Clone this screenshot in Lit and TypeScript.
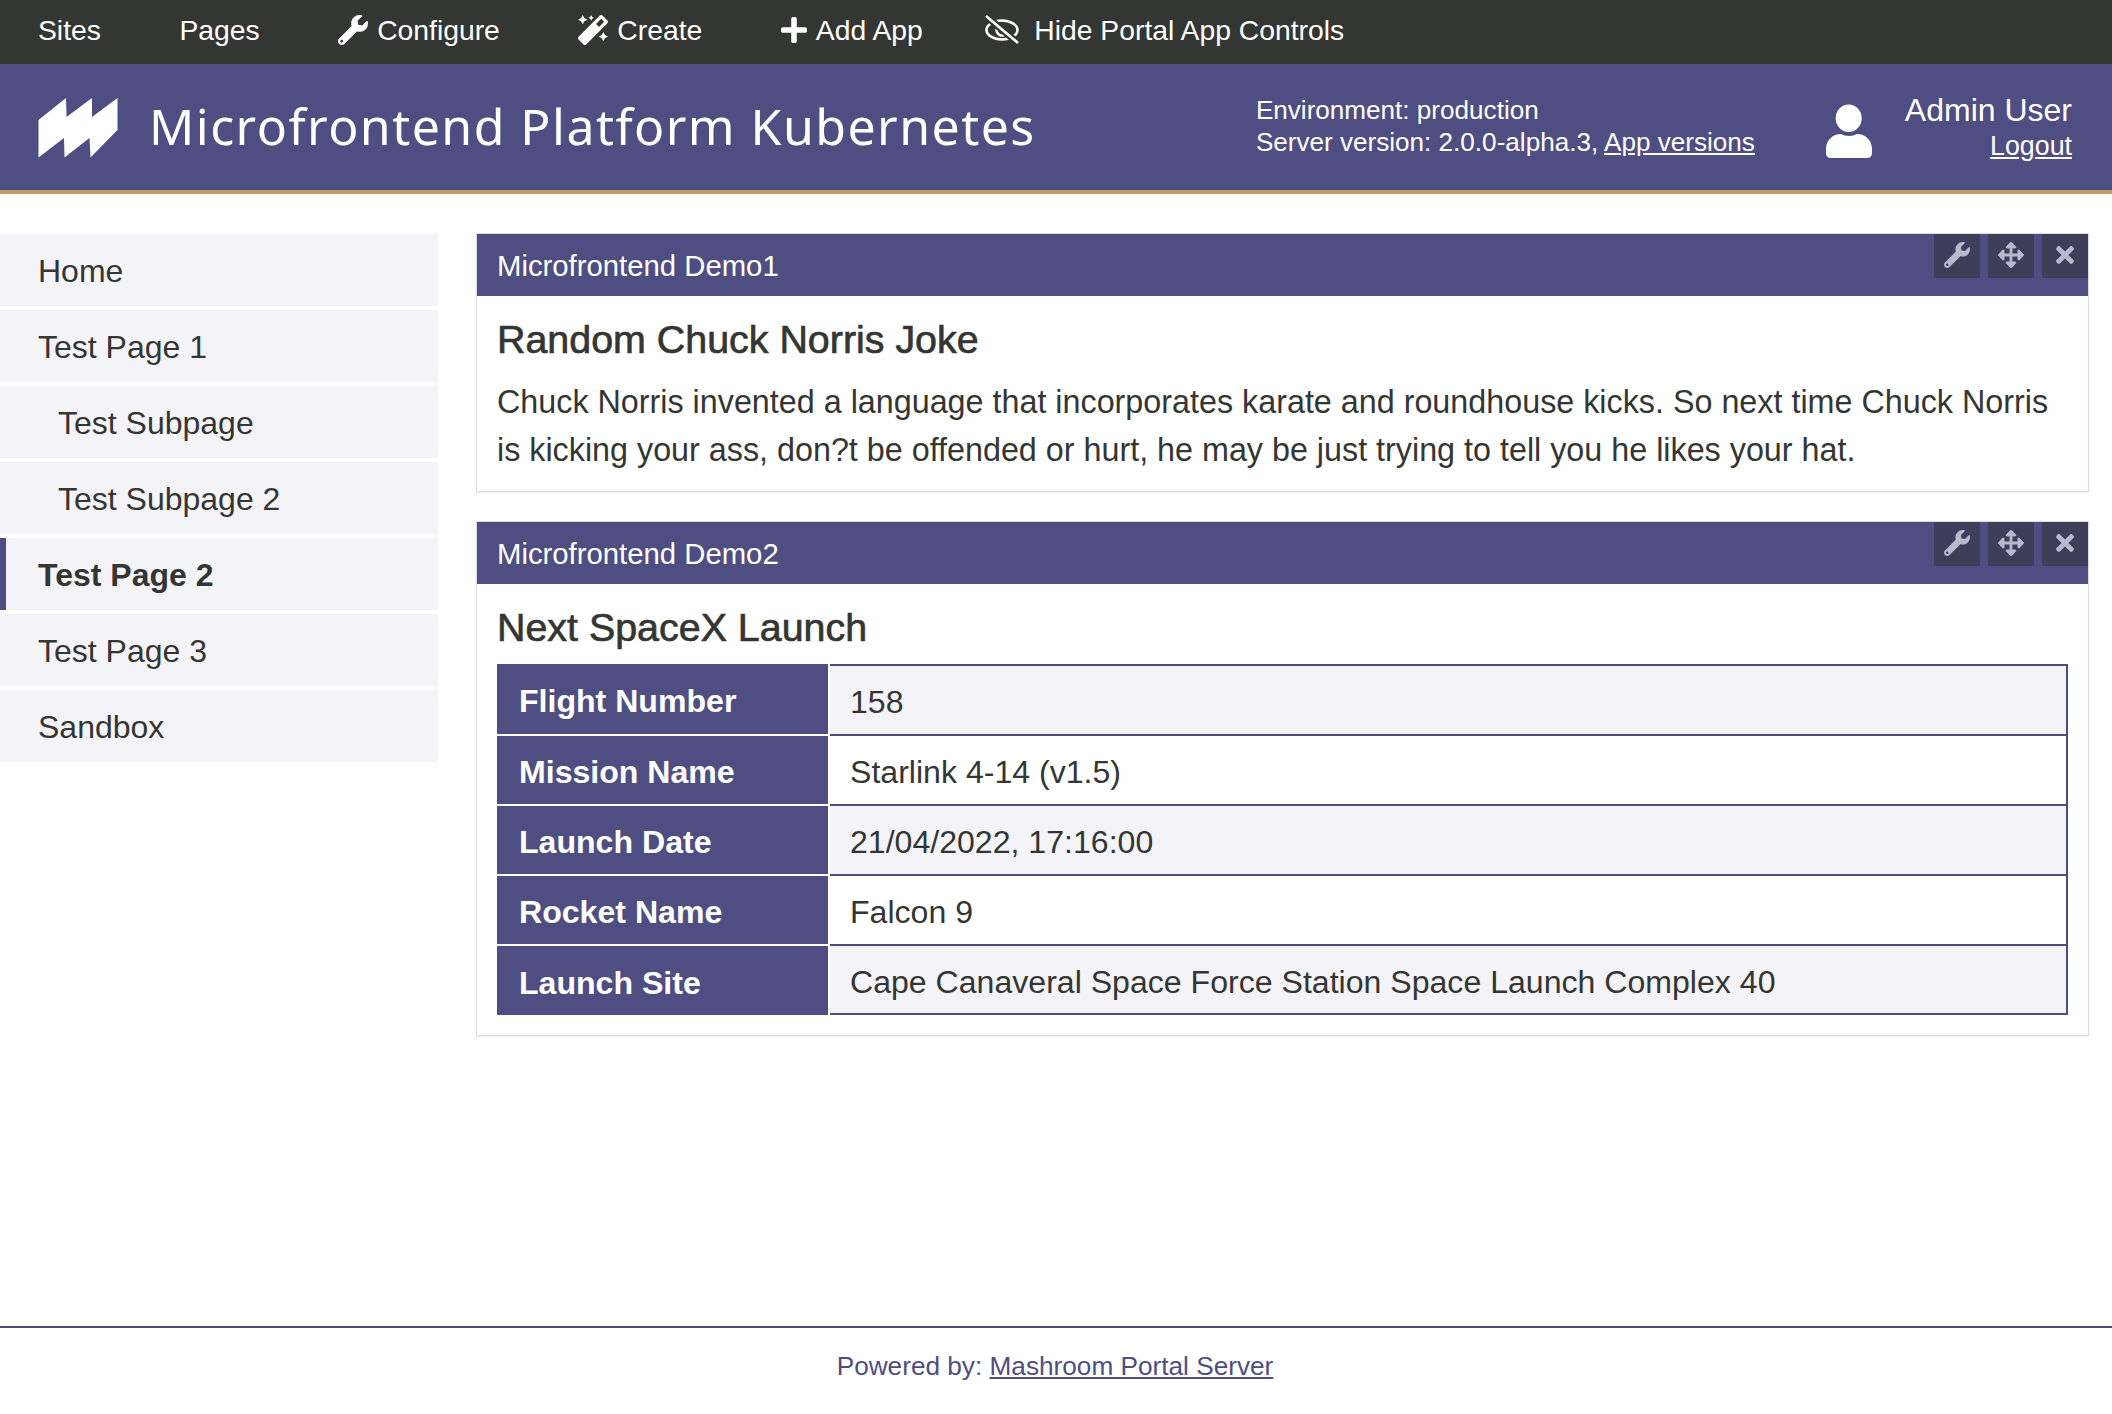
import { LitElement, html, css, svg } from "lit";
import { customElement } from "lit/decorators.js";

const wrench = svg`<path d="M507.73 109.1c-2.24-9.03-13.54-12.09-20.12-5.51l-74.36 74.36-67.88-11.31-11.31-67.88 74.36-74.36c6.62-6.62 3.43-17.9-5.66-20.16-47.38-11.74-99.55.91-136.58 37.93-39.64 39.64-50.55 97.1-34.05 147.2L18.74 402.76c-24.99 24.99-24.99 65.51 0 90.5 24.99 24.99 65.51 24.99 90.5 0l213.21-213.21c50.12 16.71 107.47 5.68 147.37-34.22 37.07-37.07 49.7-89.32 37.91-136.73zM64 472c-13.25 0-24-10.75-24-24 0-13.26 10.75-24 24-24s24 10.74 24 24c0 13.25-10.75 24-24 24z"/>`;
const wand = svg`<path d="M224 96l16-32 32-16-32-16-16-32-16 32-32 16 32 16 16 32zM80 160l26.66-53.33L160 80l-53.34-26.67L80 0 53.34 53.33 0 80l53.34 26.67L80 160zm352 128l-26.66 53.33L352 368l53.34 26.67L432 448l26.66-53.33L512 368l-53.34-26.67L432 288zm70.62-193.77L417.77 9.38C411.53 3.12 403.34 0 395.15 0c-8.19 0-16.38 3.12-22.63 9.38L9.38 372.52c-12.5 12.5-12.5 32.76 0 45.25l84.85 84.85c6.25 6.25 14.44 9.37 22.62 9.37 8.19 0 16.38-3.12 22.63-9.37l363.14-363.15c12.5-12.48 12.5-32.75 0-45.24zM359.45 203.46l-50.91-50.91 86.6-86.6 50.91 50.91-86.6 86.6z"/>`;
const plus = svg`<path d="M416 208H272V64c0-17.67-14.33-32-32-32h-32c-17.67 0-32 14.33-32 32v144H32c-17.67 0-32 14.33-32 32v32c0 17.67 14.33 32 32 32h144v144c0 17.67 14.33 32 32 32h32c17.67 0 32-14.33 32-32V304h144c17.67 0 32-14.33 32-32v-32c0-17.67-14.33-32-32-32z"/>`;
const move = svg`<path d="M352.201 425.775l-79.196 79.196c-9.373 9.373-24.568 9.373-33.941 0l-79.196-79.196c-15.119-15.119-4.411-40.971 16.971-40.97h51.162L228 284H127.196v51.162c0 21.382-25.851 32.09-40.971 16.971L7.029 272.937c-9.373-9.373-9.373-24.569 0-33.941L86.225 159.8c15.119-15.119 40.971-4.411 40.971 16.971V228H228V127.196h-51.23c-21.382 0-32.09-25.851-16.971-40.971l79.196-79.196c9.373-9.373 24.568-9.373 33.941 0l79.196 79.196c15.119 15.119 4.411 40.971-16.971 40.971h-51.162V228h100.804v-51.162c0-21.382 25.851-32.09 40.97-16.971l79.196 79.196c9.373 9.373 9.373 24.569 0 33.941L425.773 352.2c-15.119 15.119-40.971 4.411-40.97-16.971V284H284v100.804h51.23c21.382 0 32.09 25.851 16.971 40.971z"/>`;
const times = svg`<path d="M242.72 256l100.07-100.07c12.28-12.28 12.28-32.19 0-44.48l-22.24-22.24c-12.28-12.28-32.19-12.28-44.48 0L176 189.28 75.93 89.21c-12.28-12.28-32.19-12.28-44.48 0L9.21 111.45c-12.28 12.28-12.28 32.19 0 44.48L109.28 256 9.21 356.07c-12.28 12.28-12.28 32.19 0 44.48l22.24 22.24c12.28 12.28 32.2 12.28 44.48 0L176 322.72l100.07 100.07c12.28 12.28 32.2 12.28 44.48 0l22.24-22.24c12.28-12.28 12.28-32.19 0-44.48L242.72 256z"/>`;

const navItems = ["Home", "Test Page 1", "Test Subpage", "Test Subpage 2", "Test Page 2", "Test Page 3", "Sandbox"];
const rows = [
  ["Flight Number", "158"],
  ["Mission Name", "Starlink 4-14 (v1.5)"],
  ["Launch Date", "21/04/2022, 17:16:00"],
  ["Rocket Name", "Falcon 9"],
  ["Launch Site", "Cape Canaveral Space Force Station Space Launch Complex 40"],
];

@customElement("app-root")
export class AppRoot extends LitElement {
  static styles = css`
    :host {
      display: flex;
      flex-direction: column;
      min-height: 1414px;
      font-family: "Liberation Sans", Arial, sans-serif;
      color: #343633;
      background: #fff;
      --primary: #4f4e82;
    }
    .topbar {
      display: flex;
      align-items: center;
      box-sizing: border-box;
      height: 64px;
      padding: 0 0 4px 38px;
      background: #343633;
      color: #fff;
      font-size: 28.3px;
      gap: 78.5px;
      white-space: nowrap;
    }
    .tb { display: flex; align-items: center; gap: 9px; }
    .tb svg { fill: #fff; display: block; }
    .tb.hide { margin-left: -16px; gap: 15px; }
    .eye { fill: none !important; stroke-width: 2.6; }
    .header {
      display: flex;
      align-items: center;
      height: 126px;
      background: var(--primary);
      border-bottom: 4px solid #bc9e66;
      color: #fff;
      padding-left: 38px;
      padding-right: 40px;
    }
    .logo { fill: #fff; display: block; flex: none; margin-top: 2px; }
    .title {
      font-family: "Noto Sans", "Open Sans", sans-serif;
      font-size: 50px;
      letter-spacing: 1.45px;
      margin-left: 31px;
      padding-bottom: 2px;
      white-space: nowrap;
    }
    .env {
      margin-left: auto;
      font-size: 26.1px;
      line-height: 32px;
      padding-bottom: 2px;
      white-space: nowrap;
    }
    .env a, .user a, .footer a { color: inherit; text-decoration: underline; }
    .avatar { fill: #fff; display: block; margin: 8px 0 0 71px; flex: none; }
    .user {
      margin-left: 33px;
      padding-bottom: 2px;
      text-align: right;
      white-space: nowrap;
    }
    .uname { font-size: 32px; line-height: 40px; }
    .logout { font-size: 26.8px; line-height: 32px; }
    .main {
      display: flex;
      align-items: flex-start;
      padding-top: 40px;
    }
    .side {
      width: 438px;
      flex: none;
      display: flex;
      flex-direction: column;
      gap: 4px;
    }
    .item {
      box-sizing: border-box;
      height: 72px;
      display: flex;
      align-items: center;
      padding: 2px 0 0 38px;
      background: #f4f3f8;
      font-size: 32px;
    }
    .item.sub { padding-left: 58px; }
    .item.active {
      font-weight: 700;
      border-left: 6px solid var(--primary);
      padding-left: 32px;
    }
    .content {
      margin: -1px 0 0 38px;
      width: 1613px;
      display: flex;
      flex-direction: column;
      gap: 29px;
    }
    .app {
      border: 1px solid #dcdbe8;
      box-shadow: 0 1px 2px rgba(79, 78, 130, 0.12);
    }
    .apphead {
      height: 62px;
      background: var(--primary);
      color: #fff;
      display: flex;
      justify-content: space-between;
      align-items: flex-start;
      padding-left: 20px;
      font-size: 29.3px;
    }
    .apphead .name { line-height: 64px; }
    .ctrls { display: flex; gap: 8px; }
    .ctrl {
      box-sizing: border-box;
      width: 46px;
      height: 44px;
      padding-bottom: 3px;
      background: #3f3e5a;
      display: flex;
      align-items: center;
      justify-content: center;
    }
    .ctrl svg { fill: #b9b8cd; display: block; }
    .body { padding: 0 20px; }
    h3 {
      margin: 0;
      font-size: 39.4px;
      font-weight: 400;
      -webkit-text-stroke: 0.7px #343633;
      line-height: 48px;
      padding-top: 19px;
    }
    p { margin: 0; font-size: 32.3px; line-height: 48px; padding: 15px 0 17px; }
    table {
      width: 100%;
      border-collapse: separate;
      border-spacing: 0;
      font-size: 32.1px;
      margin: 13px 0 20px;
    }
    th {
      width: 333px;
      box-sizing: border-box;
      height: 70px;
      padding: 5px 0 0 22px;
      background: var(--primary);
      color: #fff;
      text-align: left;
      font-weight: 700;
      border-right: 2px solid #fff;
      border-top: 2px solid #fff;
    }
    tr:first-child th { border-top: 0; }
    tr:last-child th { height: 71px; }
    td {
      padding: 5px 0 0 20px;
      border-top: 2px solid var(--primary);
      border-right: 2px solid var(--primary);
    }
    tr:last-child td { border-bottom: 2px solid var(--primary); }
    tr:nth-child(odd) td { background: #f4f3f8; }
    .footer {
      margin-top: auto;
      border-top: 2px solid var(--primary);
      height: 76px;
      padding: 0 2px 10px 0;
      display: flex;
      align-items: center;
      justify-content: center;
      color: var(--primary);
      font-size: 26.2px;
      white-space: pre;
    }
  `;

  private panel(name: string, content: unknown) {
    return html`<section class="app">
      <div class="apphead">
        <span class="name">${name}</span>
        <div class="ctrls">
          <div class="ctrl"><svg width="26" height="26" viewBox="0 0 512 512">${wrench}</svg></div>
          <div class="ctrl"><svg width="26" height="26" viewBox="0 0 512 512">${move}</svg></div>
          <div class="ctrl"><svg width="18" height="26" viewBox="0 0 352 512">${times}</svg></div>
        </div>
      </div>
      <div class="body">${content}</div>
    </section>`;
  }

  render() {
    return html`
      <div class="topbar">
        <span class="tb">Sites</span>
        <span class="tb">Pages</span>
        <span class="tb"><svg width="30" height="30" viewBox="0 0 512 512">${wrench}</svg>Configure</span>
        <span class="tb"><svg width="30" height="30" viewBox="0 0 512 512">${wand}</svg>Create</span>
        <span class="tb"><svg width="26" height="30" viewBox="0 0 448 512">${plus}</svg>Add App</span>
        <span class="tb hide"><svg class="eye" width="34" height="30" viewBox="0 0 34 30"><g stroke="#fff"><ellipse cx="17" cy="15" rx="15.5" ry="9.5"/><path d="M11.5 15 a5.5 5.5 0 0 1 11 0" transform="rotate(200 17 15)"/></g><path d="M1 1 L33 28" stroke="#343633" stroke-width="7"/><path d="M1 1 L33 28" stroke="#fff"/></svg>Hide Portal App Controls</span>
      </div>
      <header class="header">
        <svg class="logo" width="80" height="60" viewBox="0 0 80 60"><path d="M0.5 22 L28 0 L28.5 19 L54 0 L54 19 L79.5 0 L79.5 32 L52.5 59.5 L51.5 40 L26.5 59.5 L26 40 L0.5 59.5 Z"/></svg>
        <div class="title">Microfrontend Platform Kubernetes</div>
        <div class="env">
          Environment: production<br />
          Server version: 2.0.0-alpha.3, <a href="#">App versions</a>
        </div>
        <svg class="avatar" width="46" height="54" viewBox="0 0 46 54"><ellipse cx="22.7" cy="14.3" rx="13" ry="13.7"/><path d="M0 49 V45 C0 36 7 30 15 30 C19 32.5 27 32.5 31 30 C39 30 46 36 46 45 V49 C46 52 44 54 41 54 H5 C2 54 0 52 0 49 Z"/></svg>
        <div class="user">
          <div class="uname">Admin User</div>
          <div class="logout"><a href="#">Logout</a></div>
        </div>
      </header>
      <div class="main">
        <nav class="side">
          ${navItems.map((n) => {
            const cls = n.includes("Subpage") ? "item sub" : n === "Test Page 2" ? "item active" : "item";
            return html`<div class=${cls}>${n}</div>`;
          })}
        </nav>
        <div class="content">
          ${this.panel("Microfrontend Demo1", html`
            <h3>Random Chuck Norris Joke</h3>
            <p>Chuck Norris invented a language that incorporates karate and roundhouse kicks. So next time Chuck Norris is kicking your ass, don?t be offended or hurt, he may be just trying to tell you he likes your hat.</p>
          `)}
          ${this.panel("Microfrontend Demo2", html`
            <h3>Next SpaceX Launch</h3>
            <table>
              ${rows.map((r) => html`<tr><th>${r[0]}</th><td>${r[1]}</td></tr>`)}
            </table>
          `)}
        </div>
      </div>
      <footer class="footer">Powered by: <a href="#">Mashroom Portal Server</a></footer>
    `;
  }
}
